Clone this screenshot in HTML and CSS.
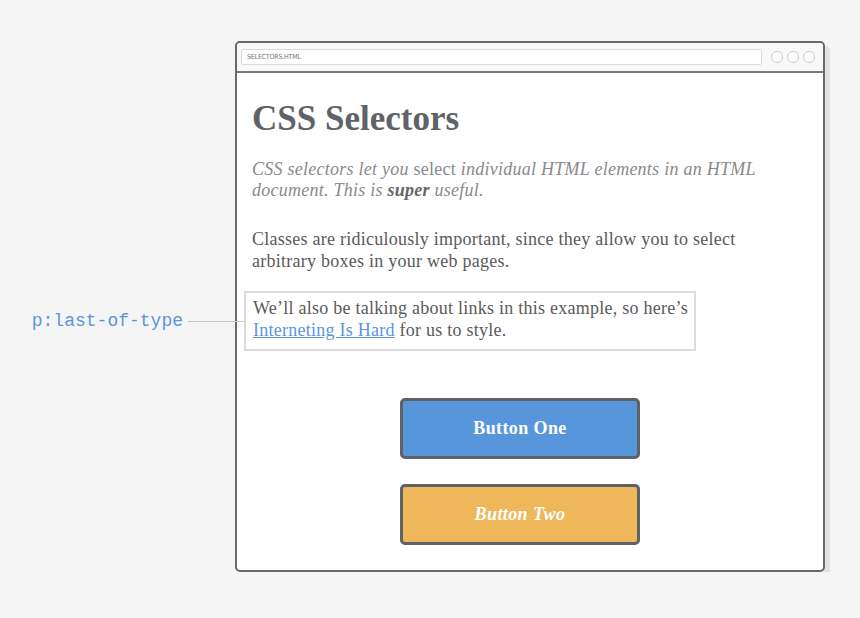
FILE: index.html
```html
<!DOCTYPE html>
<html>
<head>
<meta charset="utf-8">
<link rel="stylesheet" href="styles.css">
</head>
<body>
<div class="stage">
  <div class="window">
    <div class="callout">
      <span class="callout-label">p:last-of-type</span>
      <span class="callout-line"></span>
    </div>
    <div class="titlebar">
      <div class="address">SELECTORS.HTML</div>
      <div class="dots"><span class="dot"></span><span class="dot"></span><span class="dot"></span></div>
    </div>
    <div class="content">
      <h1 class="title">CSS Selectors</h1>
      <p class="synopsis"><em>CSS selectors let you</em> select <em>individual HTML elements in an HTML document. This is <strong>super</strong> useful.</em></p>
      <p class="para">Classes are ridiculously important, since they allow you to select arbitrary boxes in your web pages.</p>
      <p class="para boxed">We’ll also be talking about links in this example, so here’s <a class="link" href="#">Interneting Is Hard</a> for us to style.</p>
      <div class="buttons">
        <div class="button one">Button One</div>
        <div class="button two">Button Two</div>
      </div>
    </div>
  </div>
</div>
</body>
</html>
```
FILE: styles.css
```css
html, body {
  margin: 0;
  padding: 0;
  background: #f5f5f5;
}
.stage {
  padding: 41px 0 0 235px;
}
.window {
  position: relative;
  width: 586px;
  height: 527px;
  border: 2px solid #666a6e;
  border-radius: 5px;
  background: #fff;
  box-shadow: 5px 5px 0 #e2e2e2;
  font-family: "Liberation Serif", serif;
}
.titlebar {
  height: 28px;
  background: #f8f8f8;
  border-bottom: 2px solid #777b80;
  border-radius: 4px 4px 0 0;
  display: flex;
  align-items: center;
  padding: 0 8px 0 4px;
  gap: 9px;
}
.address {
  flex: 1;
  height: 14px;
  border: 1px solid #d8dadc;
  border-radius: 2px;
  background: #fff;
  font-family: "DejaVu Sans Condensed", "Liberation Sans Narrow", sans-serif;
  font-size: 7px;
  color: #777;
  line-height: 14px;
  padding-left: 5px;
  letter-spacing: -0.2px;
}
.dots {
  display: flex;
  gap: 4px;
}
.dot {
  width: 10px;
  height: 10px;
  border: 1px solid #c8cacc;
  border-radius: 50%;
  background: #fff;
}
.content {
  padding: 0 0 0 15px;
}
.title {
  margin: 26px 0 0 0;
  font-size: 35px;
  line-height: 40px;
  font-weight: bold;
  color: #5f6266;
}
.synopsis {
  margin: 20px 0 0 0;
  font-size: 18px;
  line-height: 21px;
  color: #8a8a8a;
  width: 540px;
  letter-spacing: 0.25px;
}
.synopsis strong {
  color: #666;
}
.para {
  margin: 27px 0 0 0;
  font-size: 18px;
  line-height: 22px;
  color: #5a5a5a;
  width: 500px;
  letter-spacing: 0.25px;
}
.para.boxed {
  margin: 19px 0 0 -8px;
  padding: 4px 6px 8px 7px;
  border: 2px solid #dcdcdc;
  width: 435px;
}
.link {
  color: #5a96dc;
}
.buttons {
  margin: 47px 0 0 148px;
  display: flex;
  flex-direction: column;
  gap: 25px;
}
.button {
  width: 234px;
  height: 55px;
  border: 3px solid #5f6368;
  border-radius: 5px;
  display: flex;
  align-items: center;
  justify-content: center;
  color: #fff;
  font-weight: bold;
  font-size: 18px;
  letter-spacing: 0.4px;
}
.button.one {
  background: #5896dc;
}
.button.two {
  background: #eeb75a;
  font-style: italic;
}
.callout {
  position: absolute;
  right: 100%;
  top: 268px;
  display: flex;
  align-items: center;
  margin-right: -8px;
  white-space: nowrap;
}
.callout-label {
  font-family: "Liberation Mono", monospace;
  font-size: 18px;
  line-height: 20px;
  color: #5a96dc;
  margin-right: 5px;
}
.callout-line {
  width: 57px;
  height: 1px;
  background: #c8c8c8;
}
```
